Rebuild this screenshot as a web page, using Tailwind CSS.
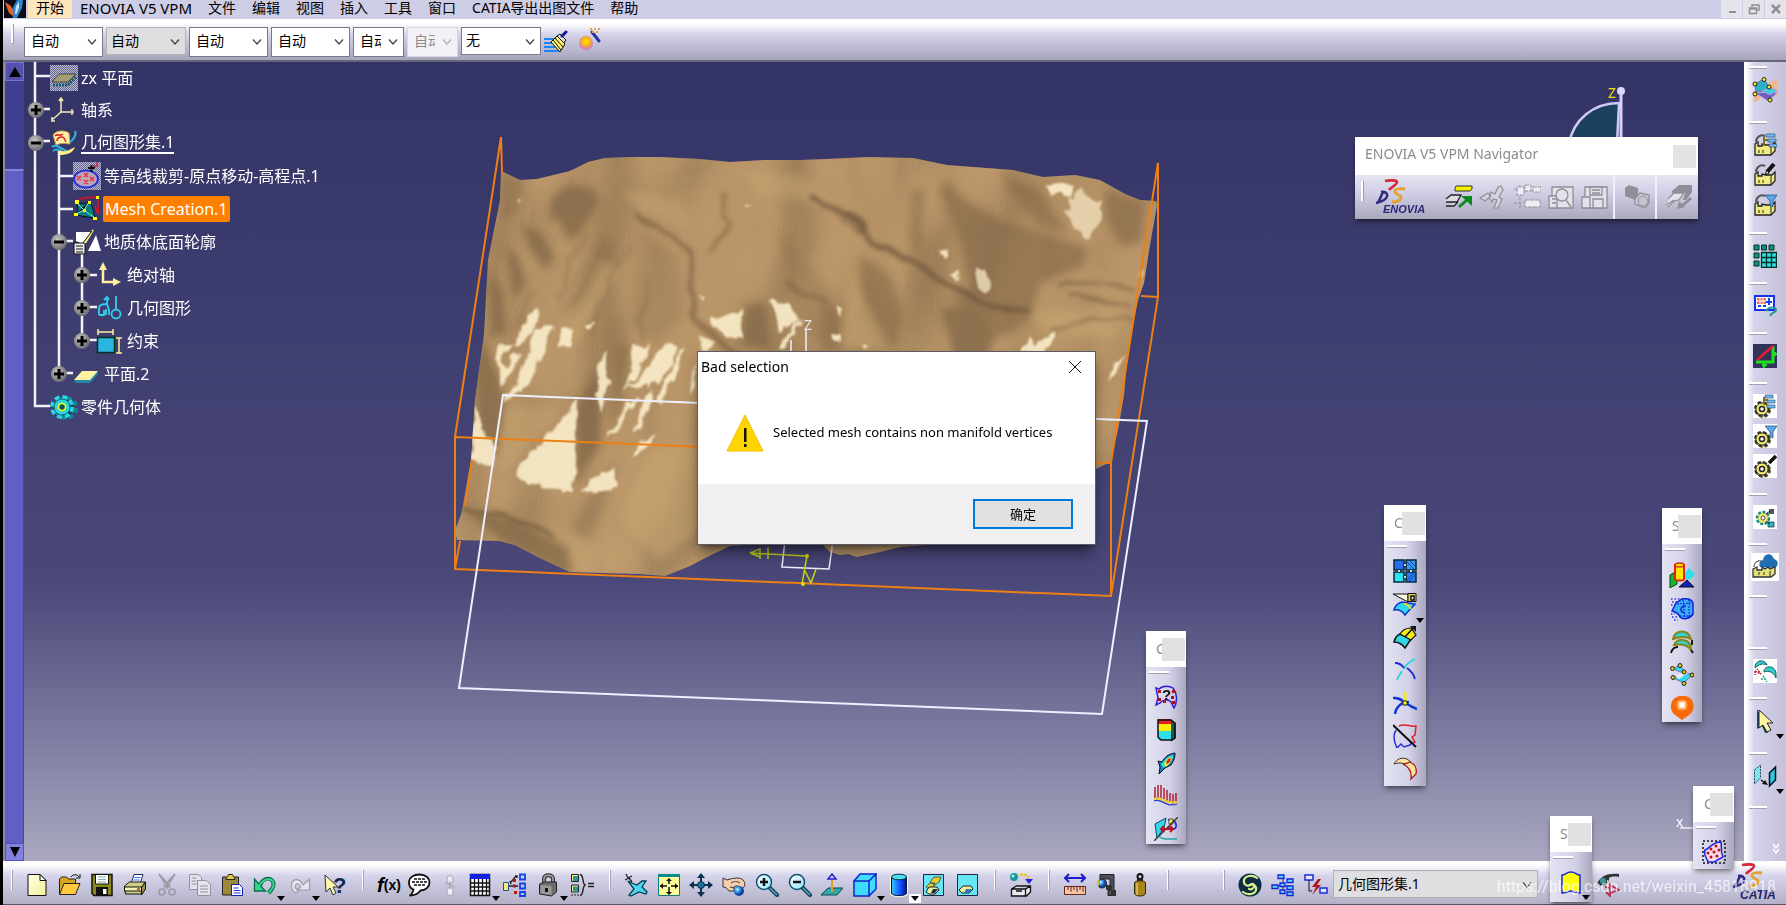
<!DOCTYPE html>
<html lang="zh-CN">
<head>
    <meta charset="UTF-8">
    <meta name="viewport" content="width=device-width, initial-scale=1.0">
    <title>CATIA V5</title>
    <script src="https://cdn.jsdelivr.net/npm/@tailwindcss/browser@4"></script>
</head>
<body class="relative h-screen overflow-hidden bg-black pl-[3px] font-['Noto_Sans','Noto_Sans_CJK_SC',sans-serif] text-black">

    <!-- Icon sprite -->
    <svg width="0" height="0" class="absolute" aria-hidden="true">
        <defs>
            <linearGradient id="g-yellow" x1="0" y1="0" x2="1" y2="1"><stop offset="0" stop-color="#ffffe8"/><stop offset="1" stop-color="#f5ef9a"/></linearGradient>
            <linearGradient id="g-cyl" x1="0" x2="1"><stop offset="0" stop-color="#35c8ff"/><stop offset=".5" stop-color="#1560ff"/><stop offset="1" stop-color="#0010a0"/></linearGradient>
            <linearGradient id="g-lens" x1="0" y1="0" x2="1" y2="1"><stop offset="0" stop-color="#fff"/><stop offset="1" stop-color="#8ee8f8"/></linearGradient>
            <radialGradient id="g-ball" cx=".35" cy=".35"><stop offset="0" stop-color="#c8f4ff"/><stop offset=".5" stop-color="#2f9be8"/><stop offset="1" stop-color="#1040a0"/></radialGradient>
            <radialGradient id="g-gold" cx=".5" cy=".4"><stop offset="0" stop-color="#ffe800"/><stop offset=".6" stop-color="#f7b21a"/><stop offset="1" stop-color="#d97fc0"/></radialGradient>
            <pattern id="p-dots" width="2" height="2" patternUnits="userSpaceOnUse"><rect width="2" height="2" fill="#67679a"/><rect width="1" height="1" fill="#b9b9c8"/><rect x="1" y="1" width="1" height="1" fill="#b9b9c8"/></pattern>
        </defs>

        <symbol id="i-app" viewBox="0 0 22 18"><path fill="#0a0d14" d="M0 0h22v18H0z"/><path fill="#2d86d0" d="M9 18L8 9l5-9h6l-1 8-5 10z"/><path fill="#bfe4fb" d="M11 13l1-7 3-4v6l-3 7z"/><path fill="#e8622a" d="M1 2l6 4 2 5v5l-4-3-2-5z"/></symbol>

        <symbol id="i-new" viewBox="0 0 24 24"><path fill="url(#g-yellow)" stroke="#111" d="M3 1.500h12l6 6v15H3z"/><path fill="#fff" stroke="#111" d="M15 1.500v6h6z"/></symbol>
        <symbol id="i-open" viewBox="0 0 24 24"><path fill="#d9a520" stroke="#222" d="M1.500 21V6l2-2h5l2 2h7v5"/><path fill="#ffc940" stroke="#222" d="M1.500 21.500L6 10.500h16l-4.500 11z"/><path fill="none" stroke="#111" d="M13 4c2-3 6-3 8 0m1-3v4h-4"/></symbol>
        <symbol id="i-save" viewBox="0 0 24 24"><path fill="#8c8a16" stroke="#111" stroke-width="1.500" d="M2 1.500h20v21H4l-2-2z"/><path fill="#fff" stroke="#111" d="M5.500 1.500h13V11h-13z"/><path stroke="#8aa" d="M8 4h8M8 6.500h8M8 9h8"/><path fill="#111" d="M6 14h12v8H6z"/><path fill="#fff" d="M13 16h3.500v5H13z"/></symbol>
        <symbol id="i-print" viewBox="0 0 24 24"><path fill="#fff" stroke="#225" d="M8 11l3-9.500h9L17 11z"/><path stroke="#26f" d="M11.500 4.500h6M10.500 7h6M9.500 9.500h6"/><path fill="#cfd08a" stroke="#111" d="M1.500 13l5-4h16l-4 5v7h-16z"/><path fill="#8f9140" stroke="#111" d="M18.500 14l4-5v7l-4 6z"/><path fill="#f3f3b5" stroke="#111" d="M1.500 14h17v4h-17z"/><path stroke="#c22" stroke-width="1.500" d="M14 16h3"/></symbol>
        <symbol id="i-cut" viewBox="0 0 24 24"><g fill="none" stroke="#9a9aa6" stroke-width="1.500"><path fill="#e8e8f0" d="M4 1l9 14 2-2zM20 1l-9 14-2-2z"/><circle cx="7" cy="19" r="3"/><circle cx="17" cy="19" r="3"/></g></symbol>
        <symbol id="i-copy" viewBox="0 0 24 24"><g fill="#e4e4ee" stroke="#9292a0"><path d="M1.500 1.500h9l3 3v12h-12z"/><path d="M9.500 7.500h9l4 4v11h-13z"/><path d="M3.500 5h5M3.500 8h5M3.500 11h5M12 13h8M12 16h8M12 19h8"/></g></symbol>
        <symbol id="i-paste" viewBox="0 0 24 24"><path fill="#9b8a3c" stroke="#222" d="M2.500 4h16v18h-16z"/><path fill="#eccb39" stroke="#222" d="M6 6.500c0-3 2-2 2.500-5h4c.5 3 2.500 2 2.500 5z"/><path fill="#fff" stroke="#12a" d="M11.500 11.500h8l3 3v8h-11z"/><path stroke="#23f" d="M13.500 15h5M13.500 17.500h7M13.500 20h7"/></symbol>
        <symbol id="i-undo" viewBox="0 0 24 24"><path fill="none" stroke="#0a6a4a" stroke-width="4" d="M7 13C9 4 21 3 20.500 12c-.3 3-2 5-5 8"/><path fill="#35d68b" stroke="#0a6a4a" stroke-width="1.300" d="M1.500 6v12h11l-4-4z"/><path fill="none" stroke="#35d68b" stroke-width="2" d="M6 14C9 5 21 3 20.500 12c-.3 3-2 5-5 8"/></symbol>
        <symbol id="i-redo" viewBox="0 0 24 24"><path fill="#e6e6f0" stroke="#9c9ca8" stroke-width="1.200" d="M15 12C12 5 5 5 3.500 11c-.8 3 1 7 4 9l3-2c-3-2-4-4-3-6 1-2 4-2 5 2l-3 3h12V6z"/></symbol>
        <symbol id="i-comment" viewBox="0 0 24 24"><path fill="#fff" stroke="#111" stroke-width="1.800" d="M12.500 1.500c6 0 10 3.500 10 8s-4 8-9 8c-2 3-6 5-11 5 2-1 4-4 4-6-3-1-4.500-4-4.500-7 0-5 4.500-8 10.500-8z"/><path stroke="#111" stroke-width="1.500" stroke-dasharray="3 1" d="M7 6h11M5 9h15M7 12h11"/></symbol>
        <symbol id="i-chain" viewBox="0 0 24 24"><g fill="#ececf4" stroke="#a4a4b0"><rect x="9" y="2.500" width="6" height="8" rx="3"/><rect x="9" y="14.500" width="6" height="8" rx="3"/><path d="M7 10l10 4M12 8v8"/></g></symbol>
        <symbol id="i-table" viewBox="0 0 24 24"><path fill="#fff" stroke="#111" stroke-width="1.500" d="M2.500 1.500h19v21h-19z"/><path fill="#1420e8" d="M2 1h20v5H2z"/><path stroke="#111" stroke-width="1.300" d="M6.500 6v16M10.500 6v16M14.500 6v16M18.500 6v16M2 10h20M2 14h20M2 18h20"/></symbol>
        <symbol id="i-tree" viewBox="0 0 24 24"><path fill="#ffe97a" stroke="#125a90" d="M1.500 9.500h5v8h-5z"/><path fill="none" stroke="#14e" stroke-width="1.800" d="M18 1.500h5v5h-5zM18 10.500h5v5h-5zM18 19h5v4h-5z"/><path stroke="#222" stroke-width="1.300" d="M7 13h9M9 9l5-6M9 11l-1-3M13 3h2v2"/><path fill="#c11" d="M11 6h3v3h-3zM11 11.500h3v3h-3zM12 18h3v3h-3z"/></symbol>
        <symbol id="i-lock" viewBox="0 0 24 24"><path fill="none" stroke="#333" stroke-width="4" d="M8 11V6c0-5 9-5 9 0v4"/><path fill="none" stroke="#aaa" stroke-width="1.500" d="M8 11V6c0-5 9-5 9 0v4"/><path fill="#6d6d6d" stroke="#222" d="M3.500 11l5-2h12v10l-5 4-12-2z"/><path fill="#999" d="M4.500 12l11 1v9l-11-1.500z"/><path fill="#111" d="M9 15h3v4H9z"/></symbol>
        <symbol id="i-brace" viewBox="0 0 24 24"><path fill="#ffe97a" stroke="#222" d="M1.500 1.500h7v7h-7zM1.500 12h7v7h-7z"/><path fill="#1b9aa8" d="M3 3h5v5H3zM3 13.500h5v5H3z"/><path stroke="#222" stroke-dasharray="2 1" d="M1 22h8"/><path fill="none" stroke="#222" stroke-width="1.400" d="M10 1.500c4 0 2 9 5 10.500-3 2-1 10-5 10.500M18 10.500h6M18 13.500h6"/></symbol>
        <symbol id="i-plane" viewBox="0 0 24 24"><path fill="#46d9f0" stroke="#0c3a52" stroke-width="1.300" d="M4 8l4 2 5 2 5-4 4 0-4 6 5 5-1 2-7-2-8 4-2-1 5-6z"/><path fill="none" stroke="#222" stroke-width="1.300" d="M2 1l2 4 4-2M5 5l3 4M1 7l4-2"/></symbol>
        <symbol id="i-fit" viewBox="0 0 24 24"><path fill="#fffb9a" stroke="#0b7a7a" d="M1.500 1.500h21v21h-21z"/><path fill="#0b8a8a" d="M1 1h22v3H1z"/><path stroke="#111" stroke-width="1.500" d="M12 6v5M12 14v7M3 13h7M14 13h7"/><path fill="#111" d="M12 5l3 3H9zM12 22l3-3H9zM3 13l3-3v6zM21 13l-3-3v6z"/></symbol>
        <symbol id="i-pan" viewBox="0 0 24 24"><path stroke="#0d2f52" stroke-width="2" d="M12 3v18M3 12h18"/><path fill="#0d2f52" d="M12 0l4 5H8zM12 24l4-5H8zM0 12l5-4v8zM24 12l-5-4v8z"/><circle cx="12" cy="12" r="3.500" fill="#1b6f9a" stroke="#0d2f52"/></symbol>
        <symbol id="i-rotate" viewBox="0 0 24 24"><path fill="#f8cfae" stroke="#333" d="M1 5l4 2c5-2 14-3 16 0 3 3 2 8-1 8-3-2-5-3-8-1v4H7c-2-2-2-4-6-4z"/><path fill="none" stroke="#333" d="M9 10c3-2 6-2 9 0M8 14l4 1"/><circle cx="17" cy="18" r="5" fill="url(#g-ball)"/></symbol>
        <symbol id="i-zoomin" viewBox="0 0 24 24"><path stroke="#12405e" stroke-width="4" stroke-linecap="round" d="M14 14l8 8"/><path stroke="#5aa8b8" stroke-width="1.500" d="M15 15l7 7"/><circle cx="9" cy="9" r="7.500" fill="url(#g-lens)" stroke="#12506e" stroke-width="1.500"/><path stroke="#111" stroke-width="2.500" d="M5 9h8M9 5v8"/></symbol>
        <symbol id="i-zoomout" viewBox="0 0 24 24"><path stroke="#12405e" stroke-width="4" stroke-linecap="round" d="M14 14l8 8"/><path stroke="#5aa8b8" stroke-width="1.500" d="M15 15l7 7"/><circle cx="9" cy="9" r="7.500" fill="url(#g-lens)" stroke="#12506e" stroke-width="1.500"/><path stroke="#111" stroke-width="2.500" d="M5 9h8"/></symbol>
        <symbol id="i-normal" viewBox="0 0 24 24"><path fill="#2fa5ad" stroke="#0b4950" d="M1 22l7-7h15l-6 7z"/><path stroke="#e0a020" stroke-width="2" d="M12 6v13"/><path fill="none" stroke="#22d" stroke-width="1.500" d="M8 6l4-5 4 5z"/></symbol>
        <symbol id="i-cube" viewBox="0 0 24 24"><path fill="#3fdcff" stroke="#1324c8" stroke-width="1.500" d="M1 8h15v15H1zM1 8l6-7h16l-7 7zM16 23l7-7V1l-7 7z"/></symbol>
        <symbol id="i-cyl" viewBox="0 0 24 24"><path fill="url(#g-cyl)" stroke="#ffd" stroke-width="2" d="M4 4v16c0 4 16 4 16 0V4z"/><path fill="url(#g-cyl)" stroke="#014" d="M4.500 4v16c0 3.500 15 3.500 15 0V4z"/><ellipse cx="12" cy="4" rx="7.500" ry="2.800" fill="#50e0e8" stroke="#034"/></symbol>
        <symbol id="i-view1" viewBox="0 0 24 24"><path fill="#67e6f5" stroke="#224" d="M2.500 1.500h20v21h-20z"/><path fill="#d8d238" stroke="#554" d="M9 9l4-5h7l-2 5-4 3zM5 14l4-4h5l-2 4-3 3z"/><path fill="#f2ef9c" stroke="#222" d="M5 19l3-5h8l2 3-4 4H8z"/><path fill="#135" d="M12 16h5l-3 4h-4z"/></symbol>
        <symbol id="i-view2" viewBox="0 0 24 24"><path fill="#67e6f5" stroke="#224" d="M2.500 1.500h20v21h-20z"/><path fill="#f2ef9c" stroke="#222" d="M4 17l4-4h8l2 3-4 4H7z"/><path fill="#2a7fb0" d="M11 16h6l-3 4H9z"/></symbol>
        <symbol id="i-move" viewBox="0 0 24 24"><circle cx="5" cy="4" r="4" fill="#189a9a"/><circle cx="4" cy="3" r="1.500" fill="#9ff"/><path fill="none" stroke="#e6c21c" stroke-width="2" stroke-dasharray="3 1" d="M11 2c5-2 8 1 9 5"/><path fill="#22d" d="M16 6h8l-4 5z"/><path fill="#e7e7ee" stroke="#111" stroke-width="1.300" d="M2.500 16l5-3h14v6l-4 4h-15zM2.500 16h14l5-3M16.500 16v7M7 18h6"/></symbol>
        <symbol id="i-measure" viewBox="0 0 24 24"><path fill="none" stroke="#1b1bd0" stroke-width="2" d="M2 5h20M6 1L2 5l4 4M18 1l4 4-4 4"/><path fill="#f6c7a6" stroke="#622" d="M1.500 13.500h21v8h-21z"/><path stroke="#622" d="M5 14v3M8 14v5M11 14v3M14 14v5M17 14v3M20 14v5"/></symbol>
        <symbol id="i-clamp" viewBox="0 0 24 24"><path fill="#4e4e56" stroke="#222" d="M4 1.500h14v21h-6v-5h2V6H4z"/><path fill="#333" d="M10 12h6v5h-6zM15 17h5v6h-5z"/><circle cx="6" cy="10.500" r="4.500" fill="url(#g-ball)" stroke="#222"/><path fill="#d7b83c" d="M1 7h2v6H1z"/></symbol>
        <symbol id="i-weight" viewBox="0 0 24 24"><circle cx="12" cy="3.500" r="2.500" fill="none" stroke="#111" stroke-width="2"/><path fill="#222" d="M9 5h6v4H9z"/><path fill="#a8841e" stroke="#332a00" d="M6.500 10c0-3 11-3 11 0v10c0 4-11 4-11 0z"/><path stroke="#e3c75e" stroke-width="1.500" d="M9 10v12"/></symbol>
        <symbol id="i-swirl" viewBox="0 0 24 24"><circle cx="12" cy="12" r="11.500" fill="#0d2c44"/><path fill="none" stroke="#d7ef8a" stroke-width="2.200" stroke-linecap="round" d="M19 5C14 1 7 3 6 7s3 7 6 5 4-1 4 1-2 4-5 3M5 19c5 4 12 2 13-2s-3-7-6-5"/></symbol>
        <symbol id="i-boxes" viewBox="0 0 24 24"><path stroke="#333" d="M4 13h14M12 5v16"/><g fill="#5ce0f0" stroke="#1420e0" stroke-width="1.300"><path d="M7 2h6v3.500H7zM16 6h6v3.500h-6zM1 12h6v3.500H1zM9 10h5v3.500H9zM16 13h6v3.500h-6zM9 17h5v3.500H9zM16 19h6v3.500h-6z"/></g></symbol>
        <symbol id="i-bolt" viewBox="0 0 24 24"><path fill="#fff8" stroke="#1430d8" stroke-width="1.500" d="M1 2h8v5H1zM16 15h7v5h-7z"/><path stroke="#111" fill="none" d="M5 7v11h3"/><path fill="#b0141c" d="M14 6l-6 8h4l-4 8 9-10h-4l4-6z"/></symbol>
        <symbol id="i-eye" viewBox="0 0 24 24"><path fill="#333" d="M1 11C4 3 12 0 23 1v3c-5-1-9 0-10 1 1 6-6 10-12 6z"/><circle cx="7" cy="8" r="3" fill="#3a9a9a"/><path fill="none" stroke="#c02548" stroke-width="1.800" d="M14 10v13l-4-4M14 12l9 5-9 3M9 14l5 1"/></symbol>

        <symbol id="i-brush" viewBox="0 0 24 24"><path stroke="#1a86f5" stroke-width="2" d="M0 9h12M0 13h12M0 17h14M0 21h15"/><path fill="#ffef6a" stroke="#111" d="M7 12l6-6 8 8-5 8z"/><path stroke="#111" d="M9 10l8 10M11 8l8 9"/><path fill="#ddd" stroke="#111" d="M13 6l3-2 6 6-2 3z"/><path stroke="#0a1a9a" stroke-width="3" stroke-linecap="round" d="M18 6l4-4"/></symbol>
        <symbol id="i-ball" viewBox="0 0 24 24"><circle cx="8" cy="16" r="7" fill="url(#g-gold)"/><path stroke="#2433a8" stroke-width="3" stroke-linecap="round" d="M14 5l7 9"/><path stroke="#e9a23c" stroke-width="2" stroke-dasharray="2 2" d="M12 2h10M14 5h8"/></symbol>

        <symbol id="t-plane" viewBox="0 0 28 26"><path fill="url(#p-dots)" d="M0 0h28v26H0z"/><path fill="#a49f72" stroke="#444" d="M2 17l7-8h17l-8 8z"/><path fill="none" stroke="#1b5a70" stroke-width="3" stroke-dasharray="2 1" d="M3 20h15l8-8"/></symbol>
        <symbol id="t-axis" viewBox="0 0 28 26"><path fill="none" stroke="#f2ecb0" stroke-width="1.500" d="M11 2v13h13M11 15l-9 8M9 4l2-3 2 3M22 12v6M2 20v4h3"/></symbol>
        <symbol id="t-set" viewBox="0 0 28 26"><path fill="#fff0a8" stroke="#c8a040" d="M3 5c3-5 12-5 16-2l1 11c-4 0-6-2-14 1z"/><path fill="none" stroke="#d22" stroke-width="1.500" d="M5 6c3-3 5 1 8-2M7 11c0-4 5-5 7-3l2 4"/><path fill="none" stroke="#2ab8e0" stroke-width="2" d="M25 1c2 4-2 9-5 11M2 17c6-4 9 3 15 4M3 21c4-3 5-1 8 0"/><path fill="#ffee80" d="M10 20c4 3 9 0 15-3-2 6-8 8-15 8z"/></symbol>
        <symbol id="t-points" viewBox="0 0 28 28"><path fill="url(#p-dots)" d="M0 0h28v28H0z"/><ellipse cx="13" cy="17" rx="12" ry="8.500" fill="#b9a7c0" stroke="#2430d8" stroke-width="2"/><g stroke="#f03030" stroke-width="1.500"><path d="M4 14l4 4m0-4l-4 4M11 11l4 4m0-4l-4 4M11 18l4 4m0-4l-4 4M17 15l4 4m0-4l-4 4"/></g><path stroke="#111" stroke-width="2" d="M15 6h7M18.500 3v7"/><path fill="none" stroke="#e02040" stroke-width="1.500" d="M24 0v4h-4"/></symbol>
        <symbol id="t-mesh" viewBox="0 0 28 26"><path fill="none" stroke="#e01020" stroke-width="1.500" d="M4 5l6-3 15-1v17l-3-8"/><path fill="#0e7f78" stroke="#012" d="M4 7l7 1 6-3 3 8 2 9-8-1-11-2 2-6z"/><path stroke="#7fe" d="M4 7l7 7 11 8M16 6l-5 8-8 4"/><g fill="#ff0"><path d="M2 4h4v4H2zM15 5h3v3h-3zM23 0h3v3h-3zM1 17h4v3H1zM20 21h4v3h-4zM10 13h3v3h-3z"/></g></symbol>
        <symbol id="t-sketch" viewBox="0 0 28 26"><path fill="#fff" d="M3 3h14v4l-6 9-8-4zM15 22l8-16 5 16z"/><path fill="#eee" stroke="#111" d="M1 14h11v11H1z"/><path stroke="#111" d="M3 17h7M3 20h7M3 23h7"/><path stroke="#fff27a" stroke-width="2" d="M12 14L20 1"/><path stroke="#111" d="M10 14L19 2"/></symbol>
        <symbol id="t-abs" viewBox="0 0 28 26"><path fill="none" stroke="#fff0a0" stroke-width="2.500" d="M7 4v16h14"/><path fill="#fff0a0" d="M7 0l4 8H3zM25 20l-8-4v8z"/></symbol>
        <symbol id="t-geo" viewBox="0 0 28 26"><path fill="none" stroke="#2fd0ee" stroke-width="1.800" d="M3 20v-7c0-3 4-4 8-4l2 6v5M3 20h5v-5M10 20v-6M11 9V2M8 5l3-3 2 3M20 1v13"/><circle cx="20" cy="19" r="4.500" fill="none" stroke="#2fd0ee" stroke-width="1.800"/></symbol>
        <symbol id="t-cons" viewBox="0 0 28 26"><path fill="#28b6e0" stroke="#032" stroke-width="1.500" d="M1.500 9.500h17v15h-17z"/><path fill="none" stroke="#fff0a0" stroke-width="1.500" d="M2 1v6M17 1v6M2 4h15M20 10h6M20 25h6M23 10v15"/></symbol>
        <symbol id="t-plane2" viewBox="0 0 28 26"><path fill="#2a86a8" d="M1 20l2 2h14l8-9-2-2z"/><path fill="#fff3a0" d="M1 19l8-9h16l-8 9z"/></symbol>
        <symbol id="i-gear" viewBox="0 0 28 26"><circle cx="16" cy="14" r="9.500" fill="none" stroke="#0a8896" stroke-width="5" stroke-dasharray="4.500 3"/><circle cx="16" cy="14" r="8" fill="#08505c"/><circle cx="12" cy="13" r="9.500" fill="none" stroke="#2fd6e6" stroke-width="5" stroke-dasharray="4.500 3"/><circle cx="12" cy="13" r="8" fill="#2fd6e6" stroke="#0b6a78"/><circle cx="12" cy="13" r="3.500" fill="#0b5560" stroke="#ff0" stroke-width="1.500"/></symbol>

        <symbol id="s-mesh" viewBox="0 0 26 26"><path fill="#f0b890" d="M1 24l3-12L25 2l1 17-12-1-11 7z"/><path fill="#2ab0c8" stroke="#7a60b8" d="M3 7l9-5 5 8-1 4-12 1z"/><path fill="#6a5fc0" stroke="#c8a8e0" d="M3 16l16-1 6 1-9 8z"/><path fill="#3ad0e0" stroke="#b090e0" d="M10 14l8-4 7 4-7 4z"/><g fill="#ffee20" stroke="#222"><circle cx="3" cy="7" r="2"/><circle cx="12" cy="2.500" r="2"/><circle cx="17" cy="10" r="2"/><circle cx="3" cy="17" r="2"/><circle cx="18" cy="23" r="2"/></g></symbol>
        <symbol id="s-box" viewBox="0 0 24 24"><path fill="#f1eb84" stroke="#222" stroke-width="1.300" d="M2 11l3-2v4h4v-2l4 1h6l3-3v9l-4 4H2z"/><path fill="none" stroke="#222" d="M18 13v9M6 17v3M10 17v3"/><path fill="none" stroke="#555" stroke-width="2" d="M3 9c0-5 5-8 9-6"/></symbol>
        <symbol id="s-boxtree" viewBox="0 0 24 24"><use href="#s-box"/><path fill="none" stroke="#7a7520" stroke-width="2" d="M11 13V3M11 7h4"/><path fill="#74b8ee" stroke="#246" stroke-width=".6" d="M13 1h9v3h-9zM15 6h8v3h-8zM16 11h8v3h-8z"/></symbol>
        <symbol id="s-boxpen" viewBox="0 0 24 24"><use href="#s-box"/><path stroke="#111" stroke-width="4" d="M21 1l-7 8"/><path fill="#eee" stroke="#111" d="M14 7l2 3-4 2z"/></symbol>
        <symbol id="s-boxfunnel" viewBox="0 0 24 24"><use href="#s-box"/><path fill="#5aa8e6" stroke="#247" stroke-width=".7" d="M12 2h12l-4 6v6l-3-2V8z"/></symbol>
        <symbol id="s-grid" viewBox="0 0 24 24"><g fill="#178a84" stroke="#032"><path d="M1 1h5v5H1zM8.500 1h5v5h-5zM16 1h5v5h-5zM1 9h5v5H1zM1 17h5v5H1z"/></g><path fill="#30dce0" stroke="#032" stroke-width="1.300" d="M8.500 8.500h15v15h-15z"/><path stroke="#032" stroke-width="1.300" d="M13.500 8v16M18.500 8v16M8 13.500h16M8 18.500h16"/></symbol>
        <symbol id="s-calc" viewBox="0 0 24 24"><path fill="#fff" stroke="#1a30f0" stroke-width="2" d="M2 2h19v14H2z"/><path fill="#f06a50" d="M4 4h9v6H4z"/><path stroke="#fff" d="M7 3v8M10 3v8M3 7h11"/><path stroke="#14e" stroke-width="2" d="M16 4v7M13 8h6M5 12h3M10 12h3"/><path fill="none" stroke="#1c9a9a" stroke-width="2" d="M13 17c3-5 10-4 10-1s-5 2-6 6"/></symbol>
        <symbol id="s-angle" viewBox="0 0 24 24"><path fill="#33335e" d="M0 0h24v24H0z"/><path fill="none" stroke="#1fe21f" stroke-width="3" d="M3 18h17V2"/><path stroke="#e81c2c" stroke-width="2.500" d="M4 16L20 2"/><path stroke="#1fe21f" stroke-width="2" d="M11 19v5M9 21h5M20 10h4M22 8v4"/></symbol>
        <symbol id="s-cog" viewBox="0 0 24 24"><path fill="#fff" d="M0 0h24v24H0z"/><circle cx="10" cy="16" r="6" fill="none" stroke="#5a5a20" stroke-width="4" stroke-dasharray="3 1.700"/><circle cx="9" cy="15" r="6" fill="none" stroke="#333" stroke-width="4" stroke-dasharray="3 1.700"/><circle cx="9" cy="15" r="6" fill="#efe874" stroke="#222" stroke-width=".8"/><circle cx="9" cy="15" r="2.500" fill="#fff" stroke="#222" stroke-width="1.500"/></symbol>
        <symbol id="s-cogtree" viewBox="0 0 24 24"><use href="#s-cog"/><path fill="none" stroke="#7a7520" stroke-width="2" d="M11 11V3M11 6h4"/><path fill="#74b8ee" stroke="#246" stroke-width=".6" d="M12 1h8v3h-8zM14 6h8v3h-8zM14 11h8v3h-8z"/></symbol>
        <symbol id="s-cogfunnel" viewBox="0 0 24 24"><use href="#s-cog"/><path fill="#5aa8e6" stroke="#247" stroke-width=".7" d="M12 2h12l-4 6v6l-3-2V8z"/></symbol>
        <symbol id="s-cogpen" viewBox="0 0 24 24"><use href="#s-cog"/><path stroke="#111" stroke-width="3.500" d="M23 2l-7 7"/></symbol>
        <symbol id="s-coglink" viewBox="0 0 24 24"><path fill="#fff" d="M0 0h24v24H0z"/><circle cx="10" cy="13" r="6" fill="#efe874" stroke="#1c8a8a" stroke-width="2.500" stroke-dasharray="3 1.500"/><circle cx="10" cy="13" r="2" fill="#fff" stroke="#555"/><path fill="#555" d="M16 4h5v5h-5z"/><path fill="#26b8c8" stroke="#222" stroke-width=".7" d="M15 17h6v5h-6z"/><path stroke="#222" d="M13 9l4-3M13 16l4 3"/></symbol>
        <symbol id="s-cloud" viewBox="0 0 28 28"><path fill="#fff" d="M0 0h28v28H0z"/><path fill="#1f6fb4" d="M9 14c-2-4 1-7 3-7 1-7 9-8 11-1 5 1 5 8 0 9z"/><path fill="#e6df7c" stroke="#333" stroke-width="1.300" d="M2 16l4-2v3h5v-3l3 2 3-2 2 2 5-2v7l-4 3H2z"/><path fill="none" stroke="#333" d="M3 14c0-4 3-7 7-6M8 19v3M13 19v3M19 18v6"/></symbol>
        <symbol id="s-arcs" viewBox="0 0 24 24"><path fill="#fff" d="M0 0h24v24H0z"/><path fill="#35cfd2" stroke="#175a60" d="M2 9C2 0 12 0 14 6c-4-2-8-1-12 3zM11 13C11 6 22 6 23 14v5c-2-6-8-8-12-6z"/><path fill="none" stroke="#b22030" stroke-width="1.500" stroke-dasharray="2 1" d="M2 12l6 3-4-5M2 12v4"/><path fill="none" stroke="#1fa890" stroke-width="1.500" stroke-dasharray="2 1" d="M10 17l4 6M8 20h6"/></symbol>
        <symbol id="s-arrow" viewBox="0 0 24 24"><path fill="#135060" d="M4 0v20l5-3 3 7h3z"/><path fill="#fff6a6" stroke="#222" d="M6 1v18l4-3 4 7 4-2-4-7h6z"/></symbol>
        <symbol id="s-mirror" viewBox="0 0 24 24"><path fill="#7fe6ee" stroke="#245" stroke-dasharray="2 1" d="M1.500 6l6-5v13l-6 6z"/><path fill="#2fc8dc" stroke="#012" stroke-width="1.500" d="M16.500 9l6-6v13l-6 6z"/><path stroke="#111" stroke-width="1.500" d="M8 16l4 3"/><path fill="#111" d="M15 21l-6-1 3-4z"/></symbol>

        <symbol id="e-send" viewBox="0 0 28 26"><path fill="#f4f000" stroke="#333" d="M11 2l-1 2v3h15l2-2V2z"/><path fill="#ddd" stroke="#222" stroke-width="1.300" d="M1 15l5-4h10l-4 7H1M1 22h8l4-4"/><path stroke="#0a8a1a" stroke-width="3" d="M14 23l9-8"/><path fill="#0a8a1a" d="M16 12h11v10z"/></symbol>
        <symbol id="e-bin" viewBox="0 0 28 26"><path fill="#d4d4de" stroke="#8e8e98" stroke-width="1.200" d="M1 14l8-5 3 3-6 5zM10 14l2-6 4 2 3-7 3-1 2 4-4 7 3 2-4 9-4 0 3-8-4-1-1 3z"/></symbol>
        <symbol id="e-tree" viewBox="0 0 28 26"><g fill="#ededf4" stroke="#94949f"><path d="M7 1v24M1 5h12M1 19h8" stroke-dasharray="3 1"/><path d="M4 3h7v8H4zM12 1h6v6h-6zM20 3h8v5h-8zM12 16h15v7H12z" stroke-dasharray="4 1"/></g></symbol>
        <symbol id="e-search" viewBox="0 0 28 26"><g fill="#e2e2ea" stroke="#8e8e98" stroke-width="1.300"><path d="M5 3h21v21H5z"/><path d="M2 12h8v12H2z"/><circle cx="15" cy="11" r="6"/><path d="M19 16l5 7M5 15h4M5 19h4"/></g></symbol>
        <symbol id="e-save" viewBox="0 0 28 26"><g fill="#e2e2ea" stroke="#8e8e98" stroke-width="1.300"><path d="M4 3h22v21H4z"/><path d="M9 3h12v8H9zM12 15h10v9H12z"/><path d="M1 13h8v11H1zM11 6h8M11 9h8"/></g></symbol>
        <symbol id="e-cubes" viewBox="0 0 28 26"><path fill="#8f8f97" d="M2 4l4-3 9 3v9l-3 3-10-4z"/><path fill="#d0d0da" stroke="#8f8f97" stroke-width="1.300" d="M12 15l5-6 9 2v8l-4 5-10-4z"/><circle cx="20" cy="17" r="5" fill="#c4c4ce" stroke="#8f8f97"/></symbol>
        <symbol id="e-block" viewBox="0 0 28 26"><path fill="#8f8f97" d="M7 7l7-6h13v7l-6 8h-3l2-7H7z"/><path fill="#e4e4ec" stroke="#8f8f97" stroke-width="1.300" d="M3 15l6-6h10l-5 7-5 1-6 6M1 21l8-5"/><path stroke="#8f8f97" stroke-width="3" d="M26 14l-9 8"/><path fill="#8f8f97" d="M12 25l2-8 6 6z"/></symbol>

        <symbol id="p-puzzle" viewBox="0 0 24 24"><g stroke="#012a3a" stroke-width="1.500"><path fill="#2a6cf0" d="M1 1h10v10H1z"/><path fill="#3a98f0" d="M13 1h10v10H13z"/><path fill="#2ee0f0" d="M1 13h10v10H1z"/><path fill="#2a7cf0" d="M13 13h10v10H13z"/></g><path stroke="#0a40a0" d="M14 3l7 7M17 2l5 5M14 21l7-7M16 22l6-6"/><g fill="#d4d4e8" stroke="#012a3a"><circle cx="12" cy="6" r="1.800"/><circle cx="12" cy="18" r="1.800"/><circle cx="6" cy="12" r="1.800"/><circle cx="18" cy="12" r="1.800"/></g></symbol>
        <symbol id="p-trim" viewBox="0 0 24 24"><path fill="#2fd8f2" stroke="#1430c8" stroke-width="1.500" d="M1 18c1-4 4-7 8-8l13 2c-3 4-7 7-10 11-2-3-6-6-11-5z"/><path fill="none" stroke="#e6dc2a" stroke-width="2" d="M11 12c4 0 6 3 7 5"/><path fill="#fffbe0" stroke="#111" d="M0 2l15 8V2z"/><path fill="#e6dc5a" stroke="#111" d="M15 1.500h8v8h-8z"/><path fill="#fff" stroke="#111" stroke-width="1.500" d="M18 4h3v4h-3z"/></symbol>
        <symbol id="p-extend" viewBox="0 0 24 24"><path fill="#2fd8e2" stroke="#111" stroke-width="1.500" d="M1 17c1-4 3-7 6-8l11 5-6 9c-3-4-7-6-11-6z"/><path fill="#f4ec1c" stroke="#111" stroke-width="1.200" d="M7 9c3-5 8-6 11-6l5 7-5 5z"/><path stroke="#111" stroke-width="1.500" d="M12 12L21 2"/><path fill="#111" d="M17 1h6v6z"/></symbol>
        <symbol id="p-cross" viewBox="0 0 24 24"><path fill="none" stroke="#20d6e0" stroke-width="1.800" d="M22 1C16 4 12 8 11 11M9 13c-2 3-4 6-5 9"/><path fill="none" stroke="#1c28d8" stroke-width="1.800" d="M2 5c4 0 7 2 9 5M14 10c4 3 7 7 8 11"/></symbol>
        <symbol id="p-node" viewBox="0 0 24 24"><path fill="none" stroke="#1236d8" stroke-width="2.500" d="M0 7c9-1 12 7 24 11M2 23c1-7 6-12 14-12"/><path stroke="#f2e61c" stroke-width="3" d="M12 1v11"/><path fill="#ff0" stroke="#222" d="M10 10h4v4h-4z"/></symbol>
        <symbol id="p-split" viewBox="0 0 24 24"><path fill="none" stroke="#e0202c" stroke-width="1.500" d="M6 2c5-3 11 1 17 0l-1 9-3 2 3 5-3 1"/><path fill="none" stroke="#2430d8" stroke-width="1.500" d="M3 6c-3 5-2 12 1 18l4-4 3 3 6-2 2-3"/><path stroke="#111" stroke-width="2" d="M0 1l23 22"/></symbol>
        <symbol id="p-flange" viewBox="0 0 24 24"><path fill="#ffe2a0" stroke="#333" d="M1 7C4 2 8 0 14 2l4 3-5 3C9 5 5 6 1 7z"/><path fill="#ffdf98" stroke="#a01820" stroke-width="1.300" d="M10 7c4 0 6-2 7-2 5 2 7 7 6 12l-5 5c1-7-2-12-8-15z"/></symbol>
        <symbol id="p-heat" viewBox="0 0 24 24"><path fill="#1a5a5a" stroke="#111" d="M16 2l5 3v15l-4 3z"/><path fill="#e81c1c" d="M4 1h13v6H4z"/><path fill="#ffee00" d="M4 6h13v8H4z"/><path fill="#2fe0e8" d="M4 13h13v9H4z"/><path fill="none" stroke="#111" stroke-width="1.500" d="M4 2h13l4 3v15l-3 2H7l-3-3z"/></symbol>
        <symbol id="p-contour" viewBox="0 0 24 24"><path fill="#1c78b8" stroke="#012" d="M4 10l4 1c3-5 6-8 13-9 0 6-2 9-4 12l-6 3-6 6 1-7z"/><path fill="#2fe0d0" d="M7 13c4-4 6-8 12-9 0 4-2 8-4 9l-6 4z"/><path fill="#ffee20" d="M10 13l4-6 4-1-2 6-4 4z"/><path fill="#e02010" d="M12 12l2-4 3-1-1 4-3 2z"/></symbol>
        <symbol id="p-comb" viewBox="0 0 24 24"><path stroke="#b02030" stroke-width="1.500" d="M1 3v12M4 1v13M7 1v13M10 4v11M13 6v12M16 9v10M19 10v10M22 9v9"/><path fill="none" stroke="#e8d020" stroke-width="2" d="M0 15c8-4 10 6 23 3"/><path fill="none" stroke="#2838c8" stroke-width="1.300" d="M0 17c8-4 10 7 23 3"/></symbol>
        <symbol id="p-dist" viewBox="0 0 24 24"><path fill="#2fd8e8" stroke="#146" d="M1 7l11-6-2 10-7 10z"/><path fill="none" stroke="#1c28e0" stroke-width="1.500" d="M14 3c6-1 9 3 8 7-1 3-6 3-8 0"/><path fill="#f3ea4c" stroke="#222" stroke-width=".7" d="M15 2h4v5h-4z"/><path stroke="#333" stroke-width="1.300" d="M0 24L24 0"/><path fill="none" stroke="#c01020" stroke-width="2" d="M7 12h12M10 9l-3 3 3 3M16 9l3 3-3 3"/><path fill="none" stroke="#20a8a8" stroke-width="1.500" d="M5 19c2 4 10 3 18 3"/></symbol>
        <symbol id="p-shapes" viewBox="0 0 26 26"><path fill="#12b82a" stroke="#142" d="M1 13l7-4v13l-7 4z"/><path fill="#2fe0e8" d="M14 13l6-7 6 6-5 6-6-1z"/><path fill="#1420b8" stroke="#112" d="M10 25l8-7 7 7z"/><path fill="#ffe800" stroke="#e82010" stroke-width="2" d="M6 3v14c0 2 9 2 9 0V3z"/><ellipse cx="10.500" cy="3" rx="4.500" ry="2" fill="#ffe800" stroke="#e82010" stroke-width="1.500"/></symbol>
        <symbol id="p-cloud" viewBox="0 0 24 24"><path stroke="#2430f0" stroke-width="1.500" stroke-dasharray="1.500 2" d="M1 2h12M2 5h8M1 8h6M1 17h4M2 20h6M4 23h4"/><path fill="#38b0f8" stroke="#1420d8" stroke-width="1.500" d="M2 14l4-8 6-4c6-1 10 1 11 4v11c-3 5-10 6-13 3-1-3-4-5-8-6z"/><path fill="none" stroke="#1420d8" stroke-width="1.500" d="M16 9c-6-1-7 7-1 7"/><path fill="none" stroke="#1420d8" stroke-dasharray="2 1" d="M13 3l2 19M7 7l15-1M10 19h12M19 3v18"/></symbol>
        <symbol id="p-bands" viewBox="0 0 24 24"><g fill="#2fd0d8"><path stroke="#8a8410" stroke-width="2" d="M3 9C5-1 18-1 21 9c-5-3-12-2-18 0z"/><path stroke="#8a8410" stroke-width="2" d="M4 15c3-8 17-7 17 5-4-6-11-6-17-5z"/></g><path fill="none" stroke="#111" stroke-width="1.800" d="M1 23c1-4 4-6 7-6M22 10v5M21 20l2 3"/></symbol>
        <symbol id="p-patch" viewBox="0 0 24 24"><path fill="#2fd8ec" stroke="#8a6aa8" d="M3 6l7-4 5 7 7 3-8 8-11-5 10-5z"/><path fill="#efe6f8" d="M5 13l9-5 4 2-9 6z"/><g fill="#d8c814" stroke="#222"><circle cx="2.500" cy="5.500" r="2"/><circle cx="10" cy="2.500" r="2"/><circle cx="3" cy="14.500" r="2"/><circle cx="14" cy="9" r="2"/><circle cx="22" cy="12" r="2"/><circle cx="14" cy="20.500" r="2"/></g></symbol>
        <symbol id="p-pin" viewBox="0 0 24 24"><path fill="#f86a08" d="M12 24L5 19C-1 15 0 5 5 2c4-3 11-3 15 0 5 4 5 13-1 17z"/><circle cx="12" cy="9" r="6" fill="#ff8a30"/><path fill="#fff" stroke="#ffd0a0" stroke-width="1.500" d="M9 6h6v6H9z"/></symbol>
        <symbol id="p-scan" viewBox="0 0 24 24"><path fill="none" stroke="#111" stroke-width="1.500" stroke-dasharray="2 2" d="M1 1h22v22H1z"/><path fill="#f6dbe6" stroke="#2026e8" stroke-width="1.500" d="M3 10c5-1 6-8 16-8 1 5-1 9 2 15l-9 5H6c-1-5-5-6-3-12z"/><g fill="#c01020"><circle cx="9" cy="9" r="1.500"/><circle cx="14" cy="6" r="1.500"/><circle cx="6" cy="13" r="1.500"/><circle cx="12" cy="12" r="1.500"/><circle cx="17" cy="10" r="1.500"/><circle cx="9" cy="17" r="1.500"/><circle cx="15" cy="16" r="1.500"/></g></symbol>
        <symbol id="p-sheet" viewBox="0 0 24 24"><path fill="#ffff00" stroke="#1c28d8" stroke-width="1.500" d="M3 5c4 0 4-3 9-3s5 3 9 3v18c-4 0-5-2-9-2s-5 2-9 2z"/></symbol>

        <symbol id="i-ds" viewBox="0 0 56 26"><path fill="none" stroke="#d8283a" stroke-width="2.600" d="M10 2c5-1 12-1 12 1 0 3-6 5-8 8"/><path fill="none" stroke="#2e2e80" stroke-width="2.600" d="M3 24l5-11M6 13c9-1 9 8-5 11"/><path fill="none" stroke="#e6a12c" stroke-width="2.800" d="M30 10c-6-1-11 0-10 3s7 3 6 6-5 4-9 4"/></symbol>
        <symbol id="i-drop" viewBox="0 0 8 5"><path d="M0 0h8L4 5z"/></symbol>
        <symbol id="i-chevron" viewBox="0 0 10 6"><path fill="none" stroke="currentColor" stroke-width="1.300" d="M1 .5l4 4.500 4-4.500"/></symbol>
    </svg>

    <div class="flex h-full flex-col">

        <!-- Menu bar -->
        <nav class="flex h-[19px] shrink-0 items-start bg-[#cdcde6] text-sm leading-4 whitespace-nowrap">
            <svg class="ml-px h-[18px] w-[22px]"><use href="#i-app"/></svg>
            <a href="#" class="ml-[2px] h-[18px] bg-[#fde6bd] px-2">开始</a>
            <div class="ml-2 flex gap-4">
                <a href="#" class="text-[15px]">ENOVIA V5 VPM</a>
                <a href="#">文件</a>
                <a href="#">编辑</a>
                <a href="#">视图</a>
                <a href="#">插入</a>
                <a href="#">工具</a>
                <a href="#">窗口</a>
                <a href="#">CATIA导出出图文件</a>
                <a href="#">帮助</a>
            </div>
            <div class="ml-auto flex h-[18px] gap-px text-[#8e8e96]">
                <button aria-label="Minimize" class="flex w-[21px] items-center justify-center bg-[#e4e4ea]"><svg class="size-3" viewBox="0 0 12 12"><path fill="currentColor" d="M3 8h7v2H3z"/></svg></button>
                <button aria-label="Restore" class="flex w-[21px] items-center justify-center bg-[#e4e4ea]"><svg class="size-3" viewBox="0 0 12 12"><path fill="none" stroke="currentColor" stroke-width="1.500" d="M4 4V2h7v5H9M1.500 5h7v5.500h-7zM1.500 6h7"/></svg></button>
                <button aria-label="Close" class="flex w-[21px] items-center justify-center bg-[#e4e4ea]"><svg class="size-3" viewBox="0 0 12 12"><path stroke="currentColor" stroke-width="2.500" d="M2 2l8 8M10 2l-8 8"/></svg></button>
            </div>
        </nav>

        <!-- Graphic properties toolbar -->
        <div class="flex h-[43px] shrink-0 items-start gap-[3px] border-b-2 border-[#66667a] bg-linear-to-b from-white from-10% via-[#d2d1e8] via-40% to-[#a6a5ba] pt-2 pl-2 text-sm">
            <div class="-mt-1 mr-2 h-5 w-[2px] bg-white shadow-[1px_1px_0_#9a9ab0]"></div>
            <div class="relative">
                <select aria-label="填充颜色" class="h-[30px] w-[79px] appearance-none border border-[#7a7a86] bg-white pr-[22px] pb-[3px] pl-[6px]"><option>自动</option></select>
                <svg class="pointer-events-none absolute top-3 right-[6px] h-[6px] w-[10px] text-[#444]"><use href="#i-chevron"/></svg>
            </div>
            <div class="relative">
                <select aria-label="透明度" class="h-[28px] w-[80px] appearance-none border border-[#b4b4b8] bg-[#dedee0] pr-[22px] pl-1"><option>自动</option></select>
                <svg class="pointer-events-none absolute top-3 right-[6px] h-[6px] w-[10px] text-[#444]"><use href="#i-chevron"/></svg>
            </div>
            <div class="relative">
                <select aria-label="线宽" class="h-[30px] w-[79px] appearance-none border border-[#7a7a86] bg-white pr-[22px] pb-[3px] pl-[6px]"><option>自动</option></select>
                <svg class="pointer-events-none absolute top-3 right-[6px] h-[6px] w-[10px] text-[#444]"><use href="#i-chevron"/></svg>
            </div>
            <div class="relative">
                <select aria-label="线型" class="h-[30px] w-[79px] appearance-none border border-[#7a7a86] bg-white pr-[22px] pb-[3px] pl-[6px]"><option>自动</option></select>
                <svg class="pointer-events-none absolute top-3 right-[6px] h-[6px] w-[10px] text-[#444]"><use href="#i-chevron"/></svg>
            </div>
            <div class="relative">
                <select aria-label="点符号" class="h-[30px] w-[51px] appearance-none border border-[#7a7a86] bg-white pr-[22px] pb-[3px] pl-[6px]"><option>自动</option></select>
                <svg class="pointer-events-none absolute top-3 right-[6px] h-[6px] w-[10px] text-[#444]"><use href="#i-chevron"/></svg>
            </div>
            <div class="relative">
                <select aria-label="渲染样式" disabled class="h-[30px] w-[51px] appearance-none border border-[#d8d8de] bg-[#f2f2f6] pr-[22px] pb-[3px] pl-[6px] text-[#8a8a90] opacity-100"><option>自动</option></select>
                <svg class="pointer-events-none absolute top-3 right-[6px] h-[6px] w-[10px] text-[#b0b0b8]"><use href="#i-chevron"/></svg>
            </div>
            <div class="relative">
                <select aria-label="图层" class="h-[28px] w-[80px] appearance-none border border-[#7a7a86] bg-white pr-[22px] pb-[3px] pl-1"><option>无</option></select>
                <svg class="pointer-events-none absolute top-3 right-[6px] h-[6px] w-[10px] text-[#444]"><use href="#i-chevron"/></svg>
            </div>
            <button aria-label="画笔" class="mt-[3px]"><svg class="size-6"><use href="#i-brush"/></svg></button>
            <button aria-label="向导" class="ml-[7px]"><svg class="size-6"><use href="#i-ball"/></svg></button>
        </div>

        <main class="flex min-h-0 flex-1">

            <!-- Scrollbar -->
            <div class="flex w-[21px] shrink-0 flex-col border-l-2 border-[#8a8a9a] bg-[#3c3c88]">
                <button aria-label="Up" class="flex h-[19px] items-center justify-center border border-[#7472d0] bg-[#5350b0]"><svg class="h-[10px] w-3" viewBox="0 0 12 10"><path d="M6 0l6 10H0z"/></svg></button>
                <div class="h-[88px] bg-[#403e90]"></div>
                <div class="flex-1 border-t-2 border-r border-[#8583e0] border-r-[#4845a0] bg-[#625fc4]"></div>
                <button aria-label="Down" class="flex h-[18px] items-center justify-center border border-[#5552b0] bg-[#8280dc]"><svg class="h-[10px] w-[10px]" viewBox="0 0 10 10"><path d="M0 0h10L5 10z"/></svg></button>
            </div>

            <!-- 3D viewport -->
            <section class="relative flex-1 overflow-hidden bg-linear-to-b from-[#333366] via-[#4a4879] via-65% to-[#aaa8c0]">
                <svg class="absolute inset-0 h-full w-full" viewBox="24 62 1720 799" preserveAspectRatio="xMinYMin slice">
                    <defs>
                        <linearGradient id="g-land" x1="0" y1="0" x2="0" y2="1"><stop offset="0" stop-color="#b08e63"/><stop offset=".5" stop-color="#ae8c61"/><stop offset="1" stop-color="#b89568"/></linearGradient>
                        <filter id="b-soft" x="-20%" y="-20%" width="140%" height="140%"><feGaussianBlur stdDeviation="4"/></filter>
                        <filter id="b-fine" x="-20%" y="-20%" width="140%" height="140%">
                            <feTurbulence type="fractalNoise" baseFrequency=".03" numOctaves="2" seed="7"/>
                            <feDisplacementMap in="SourceGraphic" scale="14" xChannelSelector="R" yChannelSelector="G"/>
                            <feGaussianBlur stdDeviation="2"/>
                        </filter>
                        <filter id="b-rock" x="-5%" y="-5%" width="110%" height="110%">
                            <feTurbulence type="fractalNoise" baseFrequency=".09 .05" numOctaves="3" seed="4"/>
                            <feDisplacementMap in="SourceGraphic" scale="12" xChannelSelector="R" yChannelSelector="G"/>
                            <feGaussianBlur stdDeviation="1"/>
                        </filter>
                        <filter id="b-relief" x="0" y="0" width="100%" height="100%" color-interpolation-filters="sRGB">
                            <feTurbulence type="fractalNoise" baseFrequency=".010 .006" numOctaves="2" seed="11"/>
                            <feColorMatrix values="0 0 0 0 0  0 0 0 0 0  0 0 0 0 0  1 0 0 0 0"/>
                            <feGaussianBlur stdDeviation="2"/>
                            <feDiffuseLighting surfaceScale="40" diffuseConstant="1.150" lighting-color="#c39e70"><feDistantLight azimuth="215" elevation="62"/></feDiffuseLighting>
                        </filter>
                        <path id="land" d="M501 171L520 180L537 179L570 171L588 162L605 158L630 157H660L700 159L730 162L765 160H800L827 159L867 157L913 158L947 165L1013 170L1043 177L1075 175L1100 180L1125 194L1140 200L1156 201L1157 205L1150 245L1144 283L1138 300L1128 350L1124 395L1118 430L1110 462L1096 469L1040 530L960 540L925 545L900 547L880 552L857 557L848 554L840 555L830 552L822 544L770 543L730 546L707 557L690 566L665 576L640 574L570 572L540 558L515 545L500 541L457 540L455 530L461 515L463 505L471 460L475 400L484 335L488 260L495 225L500 200z"/>
                        <clipPath id="c-land"><use href="#land"/></clipPath>
                    </defs>
                    <use href="#land" fill="url(#g-land)"/>
                    <g clip-path="url(#c-land)">
                        <rect x="450" y="150" width="720" height="440" filter="url(#b-relief)" opacity=".25"/>
                        <g filter="url(#b-soft)" fill="#7d6345" opacity=".7">
                            <path d="M482 335L500 380L506 408L496 458L478 428L474 370z"/>
                            <path d="M552 196l18-12 24 5 6 12-20 33-10 8-10-20-12-5z"/>
                            <path d="M522 226l18 5 14 26-8 12-16-20zM505 245l12 10 10 30-14 15zM490 270l12 20 4 40-16 10z"/>
                            <path d="M500 170l25 12-10 30-15 10z" opacity=".6"/>
                            <path d="M575 410l25-45v80l-25 40z"/>
                            <path d="M618 345l10 0-6 60-14 30z" opacity=".7"/>
                            <path d="M745 305l20-3 6 45h-30z"/>
                            <path d="M463 508l45 10 35 16 25 14 4 30-30-16-40-20z"/>
                            <path d="M945 180l20 20 35 20 60 18 28 10-5 18-43 17-10 36-24 16-46 10-20-25 20-18-18-6 28-5-10-50-20-50z" opacity=".8"/>
                            <path d="M940 305l30 5 25 25-10 25h-30z"/>
                            <path d="M860 255l30 20 12 40-4 30-20 4-16-30z" opacity=".7"/>
                            <path d="M910 190l15-2-5 70-10-20z" opacity=".6"/>
                            <path d="M1105 190l40 12-4 40-20 4-14-25z" opacity=".8"/>
                            <path d="M1000 175l40 15 30 45-30-8z" opacity=".7"/>
                            <path d="M600 480l20-20-30 80-20-10z" opacity=".5"/>
                            <path d="M640 230l40 25 5 60-30 30-25-20z" opacity=".3"/>
                            <path d="M780 230l50 60 10 60-40-20z" opacity=".35"/>
                            <path d="M600 240l-20 50-30 30 50-30 20-50z" opacity=".5"/>
                            <path d="M820 300l20 8 6 44h-26z" opacity=".6"/>
                        </g>
                        <g filter="url(#b-soft)" fill="#c6a372">
                            <path d="M650 450l50-10v90l-40 30-40-40z" opacity=".6"/>
                            <path d="M620 190l60 10 10 30-50-20zM740 170l60 5 40 30-80-10z" opacity=".5"/>
                            <path d="M1030 310h90l-8 30-70-10zM600 260l20 10-40 70-20 10z" opacity=".6"/>
                            <path d="M505 405l55 5-40 50-20 10z" opacity=".6"/>
                            <path d="M850 270l40 80h-50z" opacity=".6"/>
                        </g>
                        <g filter="url(#b-fine)" fill="none" stroke="#6b5339" stroke-linecap="round" stroke-linejoin="round">
                            <path d="M640 215l35 24 17 14-2 30 4 35 12 12 30 24" stroke-width="6" opacity=".5"/>
                            <path d="M815 198l30 18 18 16 37 22 50 30 40 22 38 6" stroke-width="6" opacity=".65"/>
                            <path d="M845 218l14 10" stroke-width="14" opacity=".4"/>
                            <path d="M724 197l2 20 6 8-16 12-4 14" stroke-width="5" opacity=".4"/>
                            <path d="M785 284l20 14 20 6" stroke-width="5" opacity=".35"/>
                            <path d="M1060 285l50 0 25 4M1070 295l60 10M1050 330l40-14 40 4" stroke-width="3" opacity=".55"/>
                            <path d="M463 507l38 8 50 20" stroke-width="4" opacity=".6"/>
                            <path d="M560 300l10-40 20-30M590 330l20-50 20-30M520 320l10-30M640 340l10-60" stroke-width="4" opacity=".25"/>
                        </g>
                        <g filter="url(#b-rock)" fill="#fbeecb" opacity=".9">
                            <path d="M540 307l-12 9-16 30 10-3 13-18z"/>
                            <path d="M533 330l22-5-10 25-10 25-20 20-12 10 17-30 8-25z"/>
                            <path d="M560 328l15 2-5 15-13 2zM522 352l-14 26-6 4 10-26z"/>
                            <path d="M497 345l15 2-12 15 10 8 8-6-16 22-6-20z"/>
                            <path d="M475 403l10 27 10 20-2 16-22-6z"/>
                            <path d="M577 396l-2 64-2 30-33-2-26-11 16-27 25-20 12-16z"/>
                            <path d="M600 475l13-5 3 20-34 2 8-12z"/>
                            <path d="M605 350l5 30-8 35-5-20 2-30z"/>
                            <path d="M630 345l20 2-10 23-15 25 6-25z"/>
                            <path d="M665 345l14 0-8 18-14 18-26 8 16-22z"/>
                            <path d="M687 345l-10 25-17 35-5-2 16-38zM655 390l-16 40-6 4 10-34zM640 395l-24 38-8 2 18-28zM670 345l-18 40-5 4 14-36z"/>
                            <path d="M655 435l-15 8-8 12 12-4z"/>
                            <path d="M708 320l33-9v28l-18-4z"/>
                            <path d="M768 302l22 1 10 17-10 4-11 12-2-16z"/>
                            <path d="M700 335l16 8-12 7-6 0zM804 318l-20 30h-5l12-22zM697 360l0 28-6 10 2-24z"/>
                            <path d="M1048 188l17-5 10 4-8 10-16-2z"/>
                            <path d="M1068 198l14-8 12 10 10 2-4 8 2 12-8 6-3 12-10-4-8-16-10-6 8-4z" opacity=".75"/>
                            <path d="M978 265l8 6 6 12-4 12-9-6-3-12z" opacity=".8"/>
                            <path d="M950 273l8-3-1 12zM940 248l8 4-2 8z"/>
                            <path d="M1020 350l10-12 6 6 19-13 1 6-14 14z"/>
                            <path d="M1127 355l-15 9-6 20 8-12z"/>
                            <path d="M833 303l9 2-3 10zM832 333l8 0-2 10-6-4zM1136 272l8 1-2 6zM698 293l9 2-2 5zM745 207l8-1-6 4zM515 198l4 0-1 4zM587 325l9 0-5 6zM862 346l7-2-2 7z"/>
                        </g>
                    </g>
                    <!-- Bounding box -->
                    <g fill="none" stroke="#ee7f14" stroke-width="2">
                        <path d="M455 437L501 137l1 36M455 437v132l656 27V463zM1111 463l47-300v134l-47 299M1158 297l-17-1M455 569l5-28M465 506l7-46"/>
                    </g>
                    <!-- Reference plane -->
                    <g fill="none" stroke="#eef0ff" stroke-width="2">
                        <path d="M503 395l644 26-45 293-643-26z"/>
                        <path d="M785 540l-3 27 47 2 4-29M806 352v-22M791 352v-12" stroke-width="1.500"/>
                    </g>
                    <text x="804" y="330" font-size="14" fill="#e8e6f0">Z</text>
                    <path fill="none" stroke="#c6d411" stroke-width="1.500" d="M807 556l-57-3 10-4v8l-10-4M760 548v11M768 547v12M807 556l-5 28M805 571l6 12 5-14"/>
                    <circle cx="807" cy="556" r="2" fill="#d8e010"/>
                    <circle cx="803" cy="584" r="2" fill="#d8e010"/>
                    <!-- Compass -->
                    <path fill="#1c4060" stroke="#d0c8f4" stroke-width="2.500" d="M1569 144c4-24 24-41 50-41l-2 41"/>
                    <path stroke="#d8d0f8" stroke-width="3" d="M1621 144V91"/>
                    <circle cx="1621" cy="91" r="4" fill="#dcd4fb"/>
                    <text x="1608" y="98" font-size="14" fill="#e8e010">Z</text>
                    <path stroke="#eeeefa" stroke-width="1.500" d="M1680 828h20"/>
                    <text x="1676" y="827" font-size="14" fill="#fff">x</text>
                </svg>

                <!-- Specification tree -->
                <svg class="absolute top-0 left-0" width="100" height="350" viewBox="24 62 100 350">
                    <path fill="none" stroke="#f2f2f8" stroke-width="2.500" d="M35 62v344h15M59 150v223M82 252v88M35 76h15M35 109h15M35 141h15M59 176h14M59 209h14M59 241h14M82 275h15M82 307h15M82 340h15M59 373h14"/>
                </svg>
                <ul class="relative pl-1 text-base whitespace-nowrap text-white [&_button]:flex [&_button]:size-4 [&_button]:items-center [&_button]:justify-center [&_button]:rounded-full [&_button]:bg-radial-[at_40%_35%] [&_button]:from-[#c8c8c8] [&_button]:to-[#4a4a52]">
                    <li class="flex h-[31px] items-center pl-[22px]"><svg class="mr-[3px] h-[26px] w-7"><use href="#t-plane"/></svg>zx 平面</li>
                    <li class="flex h-[33px] items-center"><button aria-label="展开" class="mr-[6px]"><svg class="size-[10px]" viewBox="0 0 10 10"><path stroke="#000" stroke-width="3" d="M0 5h10M5 0v10"/></svg></button><svg class="mr-[3px] h-[26px] w-7"><use href="#t-axis"/></svg>轴系</li>
                    <li>
                        <div class="flex h-[33px] items-center"><button aria-label="折叠" class="mr-[6px]"><svg class="size-[10px]" viewBox="0 0 10 10"><path stroke="#000" stroke-width="3" d="M0 5h10"/></svg></button><svg class="mr-[3px] h-[26px] w-7"><use href="#t-set"/></svg><span class="border-b-2 border-white leading-5">几何图形集.1</span></div>
                        <ul class="pl-[23px]">
                            <li class="flex h-[33px] items-center pl-[22px]"><svg class="mr-[3px] size-7"><use href="#t-points"/></svg>等高线裁剪-原点移动-高程点.1</li>
                            <li class="flex h-[33px] items-center pl-[22px]"><svg class="mr-[2px] h-[26px] w-7"><use href="#t-mesh"/></svg><span class="rounded-xs bg-[#ff7f00] px-[2px] leading-[26px]">Mesh Creation.1</span></li>
                            <li>
                                <div class="flex h-[33px] items-center"><button aria-label="折叠" class="mr-[6px]"><svg class="size-[10px]" viewBox="0 0 10 10"><path stroke="#000" stroke-width="3" d="M0 5h10"/></svg></button><svg class="mr-[3px] h-[26px] w-7"><use href="#t-sketch"/></svg>地质体底面轮廓</div>
                                <ul class="pl-[23px]">
                                    <li class="flex h-[33px] items-center"><button aria-label="展开" class="mr-[6px]"><svg class="size-[10px]" viewBox="0 0 10 10"><path stroke="#000" stroke-width="3" d="M0 5h10M5 0v10"/></svg></button><svg class="mr-[3px] h-[26px] w-7"><use href="#t-abs"/></svg>绝对轴</li>
                                    <li class="flex h-[33px] items-center"><button aria-label="展开" class="mr-[6px]"><svg class="size-[10px]" viewBox="0 0 10 10"><path stroke="#000" stroke-width="3" d="M0 5h10M5 0v10"/></svg></button><svg class="mr-[3px] h-[26px] w-7"><use href="#t-geo"/></svg>几何图形</li>
                                    <li class="flex h-[33px] items-center"><button aria-label="展开" class="mr-[6px]"><svg class="size-[10px]" viewBox="0 0 10 10"><path stroke="#000" stroke-width="3" d="M0 5h10M5 0v10"/></svg></button><svg class="mr-[3px] h-[26px] w-7"><use href="#t-cons"/></svg>约束</li>
                                </ul>
                            </li>
                            <li class="flex h-[33px] items-center"><button aria-label="展开" class="mr-[6px]"><svg class="size-[10px]" viewBox="0 0 10 10"><path stroke="#000" stroke-width="3" d="M0 5h10M5 0v10"/></svg></button><svg class="mr-[3px] h-[26px] w-7"><use href="#t-plane2"/></svg>平面.2</li>
                        </ul>
                    </li>
                    <li class="flex h-[33px] items-center pl-[22px]"><svg class="mr-[3px] h-[26px] w-7"><use href="#i-gear"/></svg>零件几何体</li>
                </ul>
            </section>

            <!-- Right toolbar -->
            <aside class="flex w-[42px] shrink-0 flex-col bg-linear-to-r from-white from-5% via-[#d4d3ea] via-25% to-[#c3c2da] pt-1 pl-[5px] [&_button]:flex [&_button]:h-[30px] [&_button]:w-8 [&_button]:items-center [&_button]:justify-center [&_i]:mb-[6px] [&_i]:block [&_i]:h-[3px] [&_i]:w-[18px] [&_i]:border-b [&_i]:border-[#a2a1b6] [&_i]:bg-white">
                <div class="h-[55px]"><i></i><button aria-label="网格"><svg class="size-[26px]"><use href="#s-mesh"/></svg></button></div>
                <div class="h-[111px]"><i></i>
                    <button aria-label="目录"><svg class="size-6"><use href="#s-boxtree"/></svg></button>
                    <button aria-label="编辑零件"><svg class="size-6"><use href="#s-boxpen"/></svg></button>
                    <button aria-label="过滤零件"><svg class="size-6"><use href="#s-boxfunnel"/></svg></button>
                </div>
                <div class="h-[50px]"><i></i><button aria-label="表格"><svg class="size-6"><use href="#s-grid"/></svg></button></div>
                <div class="h-[50px]"><i></i><button aria-label="公式"><svg class="size-6"><use href="#s-calc"/></svg></button></div>
                <div class="h-[50px]"><i></i><button aria-label="角度"><svg class="size-6"><use href="#s-angle"/></svg></button></div>
                <div class="h-[111px]"><i></i>
                    <button aria-label="特征树"><svg class="size-6"><use href="#s-cogtree"/></svg></button>
                    <button aria-label="过滤特征"><svg class="size-6"><use href="#s-cogfunnel"/></svg></button>
                    <button aria-label="编辑特征"><svg class="size-6"><use href="#s-cogpen"/></svg></button>
                </div>
                <div class="h-[50px]"><i></i><button aria-label="关联"><svg class="size-6"><use href="#s-coglink"/></svg></button></div>
                <div class="h-[52px]"><i></i><button aria-label="点云"><svg class="size-7"><use href="#s-cloud"/></svg></button></div>
                <div class="h-[52px]"><i></i></div>
                <div class="h-[50px]"><i></i><button aria-label="曲面"><svg class="size-6"><use href="#s-arcs"/></svg></button></div>
                <div class="relative h-[55px]"><i></i><button aria-label="选择"><svg class="size-6"><use href="#s-arrow"/></svg></button><svg class="absolute right-[2px] bottom-[13px] h-[5px] w-2"><use href="#i-drop"/></svg></div>
                <div class="relative h-[54px]"><i></i><button aria-label="对称"><svg class="size-6"><use href="#s-mirror"/></svg></button><svg class="absolute right-[2px] bottom-[12px] h-[5px] w-2"><use href="#i-drop"/></svg></div>
                <div><i></i></div>
                <svg class="mt-auto mr-[6px] mb-[6px] h-3 w-2 self-end" viewBox="0 0 8 12"><path fill="none" stroke="#fff" stroke-width="1.500" d="M1 1l3 4 3-4M1 6l3 4 3-4"/></svg>
            </aside>
        </main>

        <!-- Bottom toolbar -->
        <footer class="flex h-[44px] shrink-0 items-center border-b border-[#55556a] bg-linear-to-b from-white from-8% via-[#d4d3ea] via-35% to-[#b2b1c6] pl-2 [&_button]:relative [&_button]:shrink-0 [&_i]:mb-[6px] [&_i]:h-5 [&_i]:w-[2px] [&_i]:shrink-0 [&_i]:border-r [&_i]:border-[#a2a1b6] [&_i]:bg-white">
            <i class="mr-3"></i>
            <div class="mt-1 flex gap-[11px]">
                <div class="flex w-[252px] justify-between">
                    <button aria-label="新建"><svg class="size-6"><use href="#i-new"/></svg></button>
                    <button aria-label="打开"><svg class="size-6"><use href="#i-open"/></svg></button>
                    <button aria-label="保存"><svg class="size-6"><use href="#i-save"/></svg></button>
                    <button aria-label="打印"><svg class="size-6"><use href="#i-print"/></svg></button>
                    <button aria-label="剪切"><svg class="size-6"><use href="#i-cut"/></svg></button>
                    <button aria-label="复制"><svg class="size-6"><use href="#i-copy"/></svg></button>
                    <button aria-label="粘贴"><svg class="size-6"><use href="#i-paste"/></svg></button>
                    <button aria-label="撤销"><svg class="size-6"><use href="#i-undo"/></svg><svg class="absolute -right-2 -bottom-1 h-[5px] w-2"><use href="#i-drop"/></svg></button>
                </div>
                <button aria-label="重做"><svg class="size-6"><use href="#i-redo"/></svg><svg class="absolute -right-2 -bottom-1 h-[5px] w-2"><use href="#i-drop"/></svg></button>
                <button aria-label="这是什么"><svg class="size-6" viewBox="0 0 24 24"><path fill="#fff6a6" stroke="#234" d="M2 2l1 17 4-4 3 7 3-2-3-6h5z"/><text x="10" y="20" font-family="Liberation Sans" font-weight="700" font-size="22" fill="#102a55">?</text></svg></button>
            </div>
            <i class="mr-[13px] ml-[15px]"></i>
            <div class="mt-1 flex gap-[10px]">
                <div class="flex w-[115px] justify-between">
                    <button aria-label="公式" class="flex size-6 items-center justify-center font-['Liberation_Sans'] text-sm leading-none font-bold"><em class="text-xl">f</em>(x)</button>
                    <button aria-label="注释"><svg class="size-6"><use href="#i-comment"/></svg></button>
                    <button aria-label="链接"><svg class="size-6"><use href="#i-chain"/></svg></button>
                    <button aria-label="设计表"><svg class="size-6"><use href="#i-table"/></svg><svg class="absolute -right-2 -bottom-1 h-[5px] w-2"><use href="#i-drop"/></svg></button>
                </div>
                <button aria-label="关系"><svg class="size-6"><use href="#i-tree"/></svg></button>
                <button aria-label="锁定"><svg class="size-6"><use href="#i-lock"/></svg><svg class="absolute -right-2 -bottom-1 h-[5px] w-2"><use href="#i-drop"/></svg></button>
                <button aria-label="等效尺寸"><svg class="size-6"><use href="#i-brace"/></svg></button>
            </div>
            <i class="mr-[13px] ml-[15px]"></i>
            <div class="mt-1 flex gap-[10px]">
                <div class="flex w-[253px] justify-between">
                    <button aria-label="飞行模式"><svg class="size-6"><use href="#i-plane"/></svg></button>
                    <button aria-label="全部适应"><svg class="size-6"><use href="#i-fit"/></svg></button>
                    <button aria-label="平移"><svg class="size-6"><use href="#i-pan"/></svg></button>
                    <button aria-label="旋转"><svg class="size-6"><use href="#i-rotate"/></svg></button>
                    <button aria-label="放大"><svg class="size-6"><use href="#i-zoomin"/></svg></button>
                    <button aria-label="缩小"><svg class="size-6"><use href="#i-zoomout"/></svg></button>
                    <button aria-label="法线视图"><svg class="size-6"><use href="#i-normal"/></svg></button>
                    <button aria-label="等轴测视图"><svg class="size-6"><use href="#i-cube"/></svg><svg class="absolute -right-2 -bottom-1 h-[5px] w-2"><use href="#i-drop"/></svg></button>
                </div>
                <button aria-label="含边线着色"><svg class="size-6"><use href="#i-cyl"/></svg><span class="absolute -right-[10px] -bottom-[6px] bg-white p-[2px]"><svg class="h-[5px] w-2"><use href="#i-drop"/></svg></span></button>
                <button aria-label="隐藏"><svg class="size-6"><use href="#i-view1"/></svg></button>
                <button aria-label="交换可视空间"><svg class="size-6"><use href="#i-view2"/></svg></button>
            </div>
            <i class="mr-[13px] ml-[15px]"></i>
            <button aria-label="移动" class="mt-1"><svg class="size-6"><use href="#i-move"/></svg></button>
            <i class="mr-[13px] ml-[15px]"></i>
            <div class="mt-1 flex w-[89px] justify-between">
                <button aria-label="测量间距"><svg class="size-6"><use href="#i-measure"/></svg></button>
                <button aria-label="测量项"><svg class="size-6"><use href="#i-clamp"/></svg></button>
                <button aria-label="测量惯量"><svg class="size-6"><use href="#i-weight"/></svg></button>
            </div>
            <i class="mr-[39px] ml-[15px]"></i>
            <i class="mr-[13px] ml-[15px]"></i>
            <div class="mt-1 flex w-[90px] justify-between">
                <button aria-label="全部更新"><svg class="size-6"><use href="#i-swirl"/></svg></button>
                <button aria-label="展开树"><svg class="size-6"><use href="#i-boxes"/></svg></button>
                <button aria-label="重新排序"><svg class="size-6"><use href="#i-bolt"/></svg></button>
            </div>
            <div class="relative mt-[2px] ml-[5px]">
                <select aria-label="当前几何图形集" class="h-[28px] w-[205px] appearance-none border border-[#b0b0b8] bg-[#dfdfe2] pl-1 text-sm"><option>几何图形集.1</option></select>
                <svg class="pointer-events-none absolute top-3 right-[6px] h-[6px] w-[10px] text-[#444]"><use href="#i-chevron"/></svg>
            </div>
            <button aria-label="分析" class="mt-1 ml-[58px]"><svg class="size-6"><use href="#i-eye"/></svg></button>
            <svg class="mr-1 ml-auto h-10 w-[50px]" viewBox="0 0 50 40"><use href="#i-ds" width="56" height="26"/><text x="8" y="36" font-family="Liberation Sans" font-weight="700" font-style="italic" font-size="12" fill="#23236e">CATIA</text></svg>
        </footer>
    </div>

    <!-- ENOVIA palette -->
    <section class="absolute top-[137px] right-[88px] w-[343px] bg-white shadow-md shadow-black/40">
        <header class="flex h-[38px] items-center justify-between pr-[2px] pl-[10px] text-sm text-[#8c8c8c]">
            <h2 class="pb-1">ENOVIA V5 VPM Navigator</h2>
            <button aria-label="Close" class="size-[23px] bg-[#e4e2e4]"></button>
        </header>
        <div class="flex h-[44px] items-center bg-linear-to-b from-[#e6e6f2] via-[#d0cfe6] via-40% to-[#a9a8bc] pl-[6px]">
            <div class="mb-3 h-5 w-[2px] bg-white shadow-[1px_0_0_#9a9ab0]"></div>
            <svg class="ml-3 h-9 w-[56px]" viewBox="0 0 56 36"><use href="#i-ds" width="56" height="26"/><text x="8" y="34" font-family="Liberation Sans" font-weight="700" font-style="italic" font-size="11" fill="#2c2a78">ENOVIA</text></svg>
            <div class="ml-[14px] flex gap-[6px]">
                <button aria-label="发送"><svg class="h-[26px] w-7"><use href="#e-send"/></svg></button>
                <button aria-label="搜索" disabled><svg class="h-[26px] w-7"><use href="#e-bin"/></svg></button>
                <button aria-label="结构" disabled><svg class="h-[26px] w-7"><use href="#e-tree"/></svg></button>
                <button aria-label="查询" disabled><svg class="h-[26px] w-7"><use href="#e-search"/></svg></button>
                <button aria-label="保存到库" disabled><svg class="h-[26px] w-7"><use href="#e-save"/></svg></button>
            </div>
            <div class="mr-2 ml-1 h-full w-[2px] bg-[#f0f0f8]"></div>
            <button aria-label="零件" disabled><svg class="h-[26px] w-7"><use href="#e-cubes"/></svg></button>
            <div class="mr-2 ml-1 h-full w-[2px] bg-[#f0f0f8]"></div>
            <button aria-label="块" disabled><svg class="h-[26px] w-7"><use href="#e-block"/></svg></button>
        </div>
    </section>

    <!-- Surface operations palette -->
    <section class="absolute top-[505px] right-[360px] w-[42px] bg-linear-to-r from-[#e4e4f2] via-[#d2d1e8] via-60% to-[#a8a7bc] shadow-md shadow-black/40">
        <header class="flex h-[36px] items-center justify-end bg-white pr-px text-sm text-[#8c8c8c]"><h2 class="w-2 overflow-hidden">C</h2><button aria-label="Close" class="size-[23px] bg-[#e2e1e2]"></button></header>
        <div class="mt-1 ml-[3px] h-[3px] w-5 border-b border-[#a2a1b6] bg-white"></div>
        <div class="flex flex-col items-center gap-[9px] pt-[11px] pb-[5px]">
            <button aria-label="拼接"><svg class="size-6"><use href="#p-puzzle"/></svg></button>
            <button aria-label="修剪" class="relative"><svg class="size-6"><use href="#p-trim"/></svg><svg class="absolute -right-[7px] -bottom-[7px] h-[5px] w-2"><use href="#i-drop"/></svg></button>
            <button aria-label="外插延伸"><svg class="size-6"><use href="#p-extend"/></svg></button>
            <button aria-label="相交"><svg class="size-6"><use href="#p-cross"/></svg></button>
            <button aria-label="曲线节点"><svg class="size-6"><use href="#p-node"/></svg></button>
            <button aria-label="分割"><svg class="size-6"><use href="#p-split"/></svg></button>
            <button aria-label="凸缘"><svg class="size-6"><use href="#p-flange"/></svg></button>
        </div>
    </section>

    <!-- Analysis palette -->
    <section class="absolute top-[631px] right-[600px] w-[40px] bg-linear-to-r from-[#e4e4f2] via-[#d2d1e8] via-60% to-[#a8a7bc] shadow-md shadow-black/40">
        <header class="flex h-[36px] items-center justify-end bg-white pr-px text-sm text-[#8c8c8c]"><h2 class="w-[6px] overflow-hidden">C</h2><button aria-label="Close" class="size-[23px] bg-[#e2e1e2]"></button></header>
        <div class="mt-1 ml-[3px] h-[3px] w-5 border-b border-[#a2a1b6] bg-white"></div>
        <div class="flex flex-col items-center gap-[9px] pt-[11px] pb-[3px]">
            <button aria-label="信息"><svg class="size-6" viewBox="0 0 24 24"><path fill="none" stroke="#2a20d8" stroke-width="1.500" d="M2 3l3 1c4-4 11-3 14-1 4 5 5 13 1 20l-3-6c-3-3-8-3-11 1l-4 2 2-7z"/><path fill="#b01020" d="M4 5h3v3H4zM4 13h3v3H4zM9 15h3v3H9zM18 5h3v3h-3zM17 11h3v3h-3zM18 16h3v3h-3z"/><text x="8" y="15" font-family="Liberation Sans" font-weight="700" font-size="15" fill="#111">?</text></svg></button>
            <button aria-label="偏差分析"><svg class="size-6"><use href="#p-heat"/></svg></button>
            <button aria-label="等高线"><svg class="size-6"><use href="#p-contour"/></svg></button>
            <button aria-label="曲率梳"><svg class="size-6"><use href="#p-comb"/></svg></button>
            <button aria-label="距离"><svg class="size-6"><use href="#p-dist"/></svg></button>
        </div>
    </section>

    <!-- Surface creation palette -->
    <section class="absolute top-[508px] right-[84px] w-[40px] bg-linear-to-r from-[#e4e4f2] via-[#d2d1e8] via-60% to-[#a8a7bc] shadow-md shadow-black/40">
        <header class="flex h-[36px] items-center justify-end bg-white pr-px text-sm text-[#8c8c8c]"><h2 class="w-[6px] overflow-hidden">S</h2><button aria-label="Close" class="size-[23px] bg-[#e2e1e2]"></button></header>
        <div class="mt-1 ml-[3px] h-[3px] w-5 border-b border-[#a2a1b6] bg-white"></div>
        <div class="flex flex-col items-center gap-[9px] pt-[11px] pb-[2px]">
            <button aria-label="基本曲面"><svg class="size-[26px]"><use href="#p-shapes"/></svg></button>
            <button aria-label="强力拟合"><svg class="size-6"><use href="#p-cloud"/></svg></button>
            <button aria-label="多截面曲面"><svg class="size-6"><use href="#p-bands"/></svg></button>
            <button aria-label="曲线网格"><svg class="size-6"><use href="#p-patch"/></svg></button>
            <button aria-label="自动曲面"><svg class="size-6"><use href="#p-pin"/></svg></button>
        </div>
    </section>

    <!-- Cloud edition palette -->
    <section class="absolute top-[786px] right-[52px] w-[41px] bg-linear-to-r from-[#e4e4f2] via-[#d2d1e8] via-60% to-[#a8a7bc] shadow-md shadow-black/40">
        <header class="flex h-[36px] items-center justify-end bg-white pr-px text-sm text-[#8c8c8c]"><h2 class="w-[6px] overflow-hidden">C</h2><button aria-label="Close" class="size-[23px] bg-[#e2e1e2]"></button></header>
        <div class="mt-1 ml-[3px] h-[3px] w-5 border-b border-[#a2a1b6] bg-white"></div>
        <div class="flex flex-col items-center pt-[11px] pb-[5px]">
            <button aria-label="激活"><svg class="size-6"><use href="#p-scan"/></svg></button>
        </div>
    </section>

    <!-- Sketch palette -->
    <section class="absolute top-[816px] right-[194px] w-[42px] bg-linear-to-r from-[#e4e4f2] via-[#d2d1e8] via-60% to-[#a8a7bc] shadow-md shadow-black/40">
        <header class="flex h-[36px] items-center justify-end bg-white pr-px text-sm text-[#8c8c8c]"><h2 class="w-2 overflow-hidden">S</h2><button aria-label="Close" class="size-[23px] bg-[#e2e1e2]"></button></header>
        <div class="mt-1 ml-[3px] h-[3px] w-5 border-b border-[#a2a1b6] bg-white"></div>
        <div class="flex flex-col items-center pt-[11px] pb-2">
            <button aria-label="平面" class="relative"><svg class="size-6"><use href="#p-sheet"/></svg><svg class="absolute -right-[7px] -bottom-[6px] h-[5px] w-2"><use href="#i-drop"/></svg></button>
        </div>
    </section>

    <!-- Message box -->
    <div role="dialog" aria-labelledby="msg-title" class="absolute top-[351px] left-[697px] w-[399px] border border-[#5c5a66] bg-white shadow-lg shadow-black/50">
        <header class="flex h-[30px] items-center justify-between pr-[14px] pl-[3px]">
            <h2 id="msg-title" class="text-sm">Bad selection</h2>
            <button aria-label="Close"><svg class="size-3" viewBox="0 0 12 12"><path stroke="#111" d="M0 0l12 12M12 0L0 12"/></svg></button>
        </header>
        <div class="flex h-[102px] items-center gap-[9px] pl-7">
            <svg class="h-[38px] w-[38px]" viewBox="0 0 38 38"><path fill="#ffd500" stroke="#f2bd00" d="M19 1l18 36H1z"/><path fill="#111" d="M18 14h2.500v14H18zM18 30h2.500v3H18z"/></svg>
            <p class="text-[13px]">Selected mesh contains non manifold vertices</p>
        </div>
        <footer class="flex h-[60px] items-center justify-end bg-[#f0eff1] pr-[22px]">
            <button class="h-[30px] w-[100px] border-2 border-[#0078d7] bg-[#e1e1e1] text-[13px] leading-none">确定</button>
        </footer>
    </div>

    <p class="pointer-events-none absolute right-[10px] bottom-[6px] font-['Roboto'] text-base text-white/70">https://blog.csdn.net/weixin_45818918</p>
</body>
</html>
